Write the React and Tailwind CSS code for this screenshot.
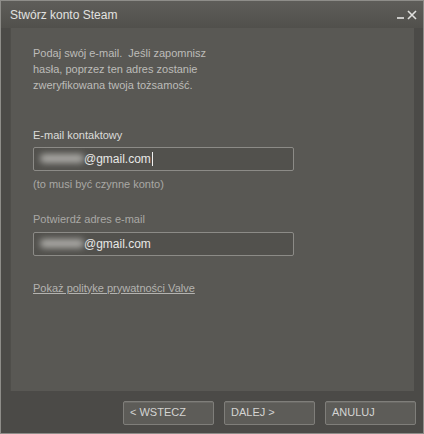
import React from "react";

function EmailField({ cursor, top = "mt-[3px]" }) {
  return (
    <div className={`${top} flex h-[24px] w-[261px] items-center rounded-[2px] border border-[#8c8b87] bg-[#52514d] pl-[6px]`}>
      <span className="h-[9px] w-[44px] rounded-full bg-[#a9a8a4] blur-[3px]" />
      <span className="text-[12px] text-[#e8e8e6]">@gmail.com</span>
      {cursor && <span className="ml-[1px] h-[14px] w-px bg-[#f0f0f0]" />}
    </div>
  );
}

function Button({ children }) {
  return (
    <button className="flex h-[24px] w-[91px] items-center rounded-[2px] border border-[#7f7e7a] bg-[#5d5c58] pl-[6px] text-[11px] text-[#d4d4d2] shadow-[inset_0_1px_0_#6a6965]">
      {children}
    </button>
  );
}

export default function App() {
  return (
    <div
      className="flex h-[434px] w-[424px] flex-col border border-[#8e8d89] bg-[#4b4a47] text-[#b9b8b5]"
      style={{ fontFamily: '"Liberation Sans", Arial, sans-serif' }}
    >
      <div className="flex h-[27px] shrink-0 items-center justify-between bg-gradient-to-b from-[#5e5d59] to-[#51504c] pl-[9px] pr-[6px]">
        <span className="text-[12px] text-[#e2e2e0]">Stwórz konto Steam</span>
        <div className="flex items-center gap-[3px] text-[#d8d8d6]">
          <span className="mt-[6px] h-[2px] w-[7px] bg-[#c8c8c6]" />
          <svg width="10" height="10" viewBox="0 0 10 10">
            <path d="M1 1 L9 9 M9 1 L1 9" stroke="#e0e0de" strokeWidth="1.6" />
          </svg>
        </div>
      </div>

      <div className="mx-[9px] flex h-[363px] shrink-0 flex-col bg-[#595854] pl-[23px] pt-[17px] shadow-[inset_1px_0_0_#4f4e4a]">
        <p className="text-[11px] leading-[16px] text-[#bdbcb9]">
          Podaj swój e-mail.&nbsp; Jeśli zapomnisz
          <br />
          hasła, poprzez ten adres zostanie
          <br />
          zweryfikowana twoja tożsamość.
        </p>

        <label className="mt-[34px] text-[11px] text-[#dcdcda]">E-mail kontaktowy</label>
        <EmailField cursor />
        <p className="mt-[5px] text-[11px] text-[#a9a8a5]">(to musi być czynne konto)</p>

        <label className="mt-[19px] text-[11px] text-[#a9a8a5]">Potwierdź adres e-mail</label>
        <EmailField top="mt-[4px]" />

        <a className="mt-[24px] w-fit text-[11px] text-[#b4b3b0] underline">
          Pokaż polityke prywatności Valve
        </a>
      </div>

      <div className="flex flex-1 items-center justify-end gap-[10px] pr-[7px] pt-[1px]">
        <Button>&lt; WSTECZ</Button>
        <Button>DALEJ &gt;</Button>
        <Button>ANULUJ</Button>
      </div>
    </div>
  );
}
